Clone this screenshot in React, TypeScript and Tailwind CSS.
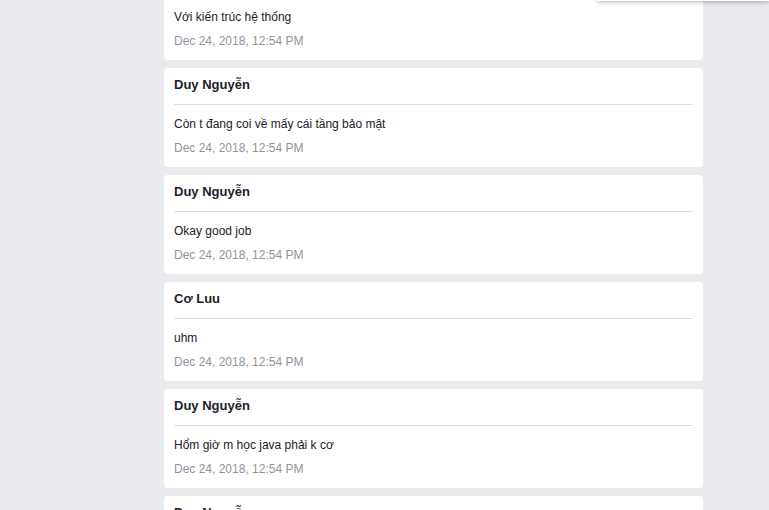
import React from 'react';

// tin nhắn trong cuộc trò chuyện
interface Message {
  id: number;
  author: string;
  text: string;
  time: string;
}

const messages: Message[] = [
  { id: 1, author: 'Duy Nguyễn', text: 'Với kiến trúc hệ thống', time: 'Dec 24, 2018, 12:54 PM' },
  { id: 2, author: 'Duy Nguyễn', text: 'Còn t đang coi về mấy cái tầng bảo mật', time: 'Dec 24, 2018, 12:54 PM' },
  { id: 3, author: 'Duy Nguyễn', text: 'Okay good job', time: 'Dec 24, 2018, 12:54 PM' },
  { id: 4, author: 'Cơ Luu', text: 'uhm', time: 'Dec 24, 2018, 12:54 PM' },
  { id: 5, author: 'Duy Nguyễn', text: 'Hổm giờ m học java phải k cơ', time: 'Dec 24, 2018, 12:54 PM' },
  { id: 6, author: 'Duy Nguyễn', text: 'Ok', time: 'Dec 24, 2018, 12:55 PM' },
];

function MessageCard({ msg }: { msg: Message }) {
  return (
    <div className="bg-white rounded-[4px] px-[10px] h-[99px] shrink-0">
      <div className="pt-[9px] pb-[11px] border-b border-[#dddfe2]">
        <p className="text-[13px] leading-[16px] font-bold text-[#1d2129]">{msg.author}</p>
      </div>
      <p className="mt-[11px] text-[12px] leading-[16px] text-[#1d2129]">{msg.text}</p>
      <p className="mt-[8px] text-[12px] leading-[16px] text-[#90949c]">{msg.time}</p>
    </div>
  );
}

export default function App() {
  return (
    <div className="relative h-[510px] overflow-hidden bg-[#e9ebee] font-['Liberation_Sans',Arial,sans-serif]">
      <div className="pl-[164px] -mt-[39px] w-[703px] flex flex-col gap-[8px]">
        {messages.map((m) => (
          <MessageCard key={m.id} msg={m} />
        ))}
      </div>
      {/* panel phía trên bị cuộn khuất */}
      <div className="absolute left-[597px] right-0 top-[-40px] h-[41px] bg-white shadow-[0_1px_5px_rgba(0,0,0,0.3)]" />
    </div>
  );
}
